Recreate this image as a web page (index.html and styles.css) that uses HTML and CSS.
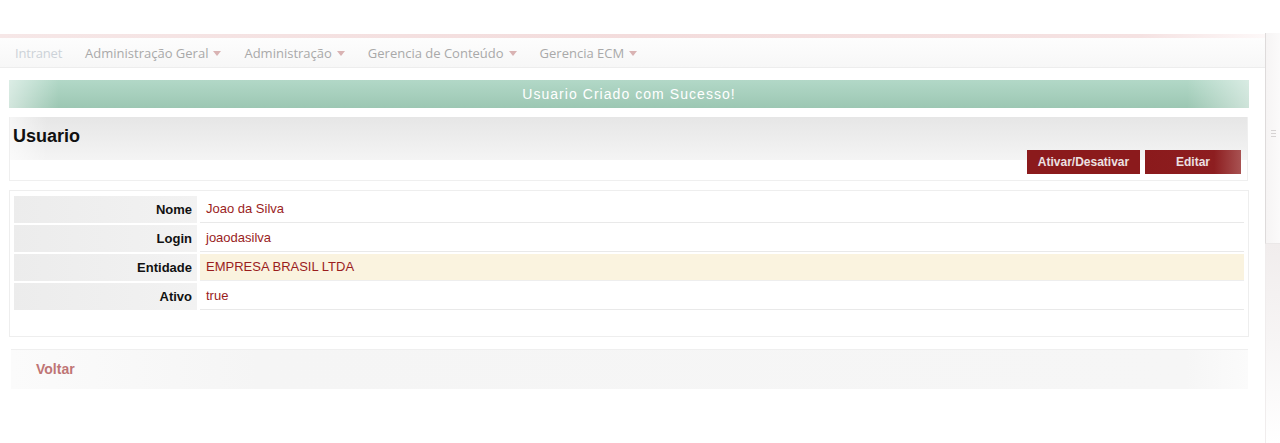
FILE: index.html
```html
<!DOCTYPE html>
<html lang="pt">
<head>
<meta charset="utf-8">
<title>Usuario</title>
<link rel="stylesheet" href="styles.css">
</head>
<body>
<div class="page">
  <div class="main">
    <div class="topgap"></div>
    <div class="navline"></div>
    <nav class="navbar">
      <a class="nav-item home">Intranet</a>
      <a class="nav-item">Administração Geral <span class="caret"></span></a>
      <a class="nav-item">Administração <span class="caret"></span></a>
      <a class="nav-item">Gerencia de Conteúdo <span class="caret"></span></a>
      <a class="nav-item">Gerencia ECM <span class="caret"></span></a>
    </nav>
    <div class="content">
      <div class="alert">Usuario Criado com Sucesso!</div>
      <div class="header-panel">
        <h1 class="title">Usuario</h1>
        <div class="actions">
          <a class="btn btn-toggle">Ativar/Desativar</a>
          <a class="btn btn-edit">Editar</a>
        </div>
      </div>
      <div class="details">
        <div class="row">
          <div class="label">Nome</div>
          <div class="value">Joao da Silva</div>
        </div>
        <div class="row">
          <div class="label">Login</div>
          <div class="value">joaodasilva</div>
        </div>
        <div class="row">
          <div class="label">Entidade</div>
          <div class="value highlight">EMPRESA BRASIL LTDA</div>
        </div>
        <div class="row">
          <div class="label">Ativo</div>
          <div class="value">true</div>
        </div>
      </div>
      <div class="footer-bar">
        <a class="back">Voltar</a>
      </div>
    </div>
  </div>
  <div class="scrollbar">
    <div class="thumb">
      <div class="grip"><span></span><span></span><span></span></div>
    </div>
    <div class="track"></div>
  </div>
</div>
</body>
</html>
```

FILE: styles.css
```css
html, body {
  margin: 0;
  padding: 0;
  background: #ffffff;
}

body {
  font-family: "Liberation Sans", Arial, sans-serif;
  height: 443px;
  overflow: hidden;
}

.page {
  display: flex;
  height: 443px;
}

.main {
  flex: 1;
  min-width: 0;
}

.topgap {
  height: 34px;
}

.navline {
  height: 4px;
  background: linear-gradient(to right, #f6e7e7 0%, #f3dcdc 50%, #f5e2e2 90%, #fdf8f8 100%);
}

.navbar {
  height: 29px;
  display: flex;
  align-items: center;
  padding-left: 3.5px;
  background: linear-gradient(to bottom, #fdfdfd, #f7f7f7);
  border-bottom: 1px solid #ededed;
  font-family: "Open Sans", "Noto Sans", sans-serif;
  font-size: 13px;
}

.nav-item {
  color: #a9a9a9;
  padding: 0 11.5px;
  white-space: nowrap;
  display: flex;
  align-items: center;
}

.nav-item.home {
  color: #ccd2d8;
  letter-spacing: -0.2px;
}

.caret {
  display: inline-block;
  width: 0;
  height: 0;
  margin-left: 5px;
  margin-top: 2px;
  border-left: 4.5px solid transparent;
  border-right: 4.5px solid transparent;
  border-top: 5px solid #d9b3b3;
}

.content {
  padding: 12px 16px 0 9px;
}

.alert {
  height: 28px;
  line-height: 29px;
  text-align: center;
  color: #ffffff;
  font-size: 14px;
  letter-spacing: 1.05px;
  background:
    linear-gradient(to right, rgba(255,255,255,0.55) 0%, rgba(255,255,255,0) 4%, rgba(255,255,255,0) 95%, rgba(255,255,255,0.5) 100%),
    linear-gradient(to bottom, #b2d8c7, #9cc7b3);
}

.header-panel {
  margin-top: 9px;
  height: 63px;
  border: 1px solid #efefef;
  border-top: 0;
  margin-right: 1px;
  padding: 0 6px 0 3px;
  display: flex;
  flex-direction: column;
  background:
    linear-gradient(to right, rgba(255,255,255,0.6) 0%, rgba(255,255,255,0) 3%),
    linear-gradient(to bottom, #e6e6e6 0px, #f4f4f4 43px, #ffffff 43px, #ffffff 100%);
}

.title {
  margin: 8px 0 0 0;
  font-size: 18px;
  font-weight: bold;
  color: #111111;
  line-height: 22px;
}

.actions {
  display: flex;
  justify-content: flex-end;
  gap: 5px;
  margin-top: 3px;
}

.btn {
  height: 24px;
  line-height: 24px;
  font-size: 12px;
  font-weight: bold;
  color: #ece0e2;
  text-align: center;
  background: #8b1a1c;
}

.btn-toggle {
  width: 113px;
}

.btn-edit {
  width: 96px;
  background: linear-gradient(to right, #8b1a1c 0%, #8d1e20 72%, #a85252 100%);
}

.details {
  margin-top: 9px;
  border: 1px solid #eeeeee;
  padding: 5px 4px 26px 4px;
  display: flex;
  flex-direction: column;
  gap: 2px;
}

.row {
  display: flex;
  height: 27px;
  gap: 3px;
}

.label {
  width: 178px;
  padding-right: 5px;
  text-align: right;
  font-size: 13px;
  font-weight: bold;
  color: #111111;
  line-height: 27px;
  background: linear-gradient(to right, #ececec, #f2f2f2);
}

.value {
  flex: 1;
  padding-left: 6px;
  font-size: 13px;
  color: #9a1d1d;
  line-height: 26px;
  border-bottom: 1px solid #e9e9e9;
}

.value.highlight {
  background: #faf3df;
  border-bottom-color: #eeeeee;
}

.footer-bar {
  margin: 12px 1px 0 2px;
  height: 40px;
  border-top: 1px solid #efefef;
  box-sizing: border-box;
  padding-left: 25px;
  padding-bottom: 1px;
  display: flex;
  align-items: center;
  background: linear-gradient(to right, #fbfbfb 0%, #f5f5f5 20%, #f6f6f6 95%, #fbfbfb 100%);
}

.back {
  font-size: 14px;
  font-weight: bold;
  color: #bf7575;
}

.scrollbar {
  width: 15px;
  display: flex;
  flex-direction: column;
  padding-top: 33px;
}

.thumb {
  height: 210px;
  border-left: 1px solid #dedbdb;
  border-bottom: 1px solid #ebe8e8;
  background: linear-gradient(to right, #f6f4f4, #fbfafa);
  display: flex;
  justify-content: center;
  align-items: center;
}

.grip {
  display: flex;
  flex-direction: column;
  gap: 2px;
  margin-top: -10px;
}

.grip span {
  display: block;
  width: 5px;
  height: 1px;
  background: #d6d3d3;
}

.track {
  flex: 1;
  border-left: 1px solid #f0eded;
  background: linear-gradient(to bottom, #f1eded 0%, #f7f5f5 50%, #ffffff 100%);
}
```
